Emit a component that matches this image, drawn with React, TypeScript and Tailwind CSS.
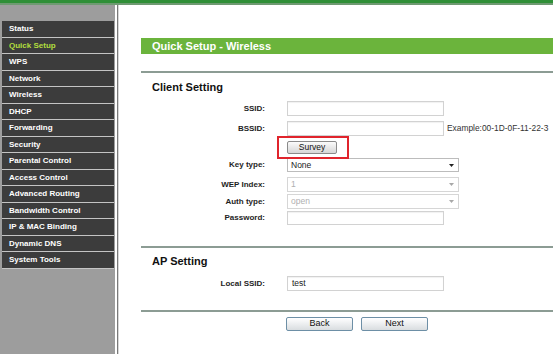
const menu = [
  "Status",
  "Quick Setup",
  "WPS",
  "Network",
  "Wireless",
  "DHCP",
  "Forwarding",
  "Security",
  "Parental Control",
  "Access Control",
  "Advanced Routing",
  "Bandwidth Control",
  "IP & MAC Binding",
  "Dynamic DNS",
  "System Tools",
];

function Label({ children }: { children: string }) {
  return (
    <div className="w-[124px] shrink-0 pr-0 text-right text-[8px] font-bold text-[#1e1e1e]">
      {children}
    </div>
  );
}

function TextBox({ value = "", w = "w-[157px]" }: { value?: string; w?: string }) {
  return (
    <div
      className={`${w} h-full border border-[#d2d2d2] bg-white pl-[4px] text-[8.5px] leading-[13px] text-[#222] shadow-[inset_0_1px_1px_rgba(0,0,0,0.06)]`}
    >
      {value}
    </div>
  );
}

function Select({ value, disabled = false }: { value: string; disabled?: boolean }) {
  return (
    <div
      className={`flex h-full w-[172px] items-center justify-between border bg-white pl-[3px] pr-[4px] text-[8.5px] ${
        disabled ? "border-[#d6d6d6] text-[#b0b0b0]" : "border-[#bcbcbc] text-[#222]"
      }`}
    >
      <span>{value}</span>
      <svg width="5" height="3" viewBox="0 0 5 3">
        <path d="M0 0h5L2.5 3z" fill={disabled ? "#a8a8a8" : "#222"} />
      </svg>
    </div>
  );
}

function Row({
  label,
  className,
  children,
}: {
  label: string;
  className: string;
  children: React.ReactNode;
}) {
  return (
    <div className={`flex items-center gap-[22px] ${className}`}>
      <Label>{label}</Label>
      <div className="flex h-full items-center">{children}</div>
    </div>
  );
}

export default function App() {
  return (
    <div
      className="flex h-[354px] w-[553px] flex-col overflow-hidden bg-white"
      style={{ fontFamily: '"Liberation Sans", Arial, sans-serif' }}
    >
      <div className="h-[3px] shrink-0 bg-[#2f8f37]" />
      <div className="h-[2px] shrink-0 bg-[#6f9a72]" />

      <div className="flex min-h-0 flex-1">
        {/* sidebar */}
        <div className="flex w-[115px] shrink-0 flex-col bg-[#9d9d9d]">
          <div className="h-[16px] shrink-0" />
          <ul className="mx-[2px] mr-[1px]">
            {menu.map((m) => (
              <li
                key={m}
                className={`h-[16.5px] border-b border-[#c4c4c4] bg-[#3c3c3c] pl-[7px] text-[8px] leading-[15.5px] font-bold ${
                  m === "Quick Setup" ? "text-[#b3de3e]" : "text-white"
                }`}
              >
                {m}
              </li>
            ))}
          </ul>
        </div>
        <div className="w-[2px] shrink-0 bg-white" />
        <div className="w-[1px] shrink-0 bg-[#7a7a7a]" />

        {/* main */}
        <div className="flex min-w-0 flex-1 flex-col overflow-hidden border-l border-[#d8d8d8] pl-[22px]">
          <div className="mt-[33px] h-[16px] shrink-0 bg-[#6bb43c] pl-[11px] text-[11px] leading-[16px] font-bold text-white">
            Quick Setup - Wireless
          </div>
          <div className="mt-[17px] h-[2px] shrink-0 bg-[#8c9c94]" />

          <div className="mt-[8px] pl-[11px] text-[11px] leading-[13px] font-bold text-[#111]">
            Client Setting
          </div>

          <Row label="SSID:" className="mt-[7px] h-[15px]">
            <TextBox />
          </Row>
          <Row label="BSSID:" className="mt-[5px] h-[15px]">
            <TextBox />
            <span className="ml-[3px] whitespace-nowrap text-[8.4px] text-[#333]">
              Example:00-1D-0F-11-22-3
            </span>
          </Row>
          <div className="mt-[5px] flex h-[13px] gap-[22px]">
            <div className="w-[124px] shrink-0" />
            <div className="relative">
              <div className="flex h-[13px] w-[50px] items-center justify-center rounded-[2px] border border-[#8a8a8a] bg-gradient-to-b from-[#fbfbfb] to-[#d6d6d6] text-[8.5px] text-[#111]">
                Survey
              </div>
              <div className="absolute -top-[5px] -left-[10px] h-[23px] w-[72px] border-2 border-[#e0242c]" />
            </div>
          </div>
          <Row label="Key type:" className="mt-[4px] h-[14px]">
            <Select value="None" />
          </Row>
          <Row label="WEP Index:" className="mt-[5px] h-[15px]">
            <Select value="1" disabled />
          </Row>
          <Row label="Auth type:" className="mt-[2px] h-[15px]">
            <Select value="open" disabled />
          </Row>
          <Row label="Password:" className="mt-[2px] h-[14px]">
            <TextBox />
          </Row>

          <div className="mt-[21px] h-[2px] shrink-0 bg-[#8c9c94]" />
          <div className="mt-[7px] pl-[11px] text-[11px] leading-[13px] font-bold text-[#111]">
            AP Setting
          </div>
          <Row label="Local SSID:" className="mt-[8px] h-[15px]">
            <TextBox value="test" />
          </Row>

          <div className="mt-[19px] h-[2px] shrink-0 bg-[#8c9c94]" />
          <div className="mt-[5px] ml-[145px] flex h-[14px] gap-[8px]">
            <div className="flex w-[67px] items-center justify-center rounded-[2px] border border-[#6d8fa6] bg-gradient-to-b from-white to-[#d9dde0] text-[9px] text-[#111]">
              Back
            </div>
            <div className="flex w-[67px] items-center justify-center rounded-[2px] border border-[#6d8fa6] bg-gradient-to-b from-white to-[#d9dde0] text-[9px] text-[#111]">
              Next
            </div>
          </div>
        </div>
      </div>
    </div>
  );
}
